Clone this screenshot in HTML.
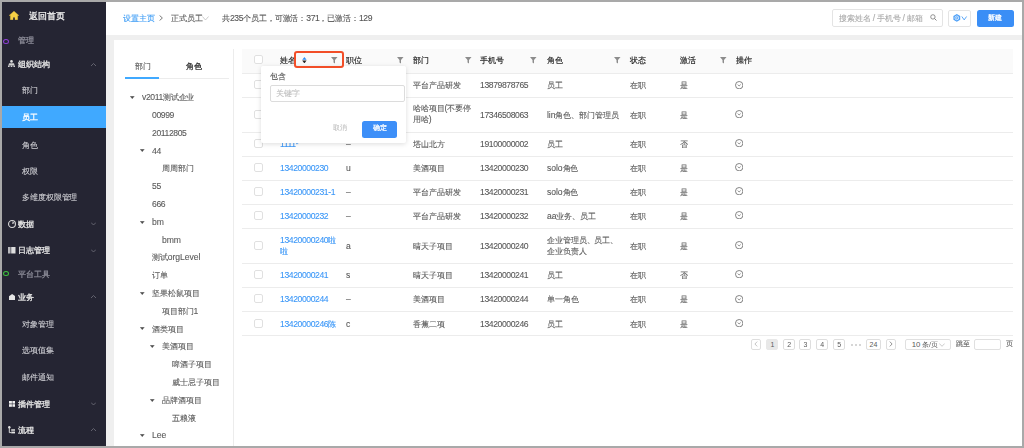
<!DOCTYPE html><html><head><meta charset="utf-8"><style>
*{margin:0;padding:0;box-sizing:border-box}
html,body{width:1024px;height:448px;overflow:hidden;background:#efefef;font-family:"Liberation Sans",sans-serif;position:relative}
.a{position:absolute;white-space:nowrap;will-change:transform;-webkit-text-stroke:0.1px currentColor;letter-spacing:-0.4px}
.c{font-size:0.9em;letter-spacing:-0.1px;position:relative;top:0.2px}
.l{letter-spacing:-0.05px}
.cb{position:absolute;width:9px;height:9px;border:1px solid #e0e0e0;border-radius:2px;background:#fff}
.pg{position:absolute;height:11.2px;border:1px solid #e0e0e0;border-radius:2px;font-size:7px;line-height:9px;text-align:center;color:#595959;background:#fff}
</style></head><body>
<div class="a" style="left:0px;top:0px;width:106.00px;height:448.00px;background:#252533"></div>
<div class="a" style="left:0px;top:106px;width:106.00px;height:22.00px;background:#40a9ff"></div>
<svg class="a" style="left:9px;top:10.8px" width="10" height="8.7" viewBox="0 0 10 8.7"><path d="M5 0.2 L9.8 4.4 L8.6 4.4 L8.6 8.7 L6 8.7 L6 6.3 L4 6.3 L4 8.7 L1.4 8.7 L1.4 4.4 L0.2 4.4 Z" fill="#f7d145" stroke="#f7d145" stroke-width="0.4" stroke-linejoin="round"/></svg>
<div class="a" style="left:29px;top:10.00px;font-size:9.6px;line-height:12px;color:#f2f2f2;-webkit-text-stroke:0.3px #f2f2f2;"><span class="c">返回首页</span></div>
<div class="a" style="left:2.9px;top:38.6px;width:5.9px;height:5.2px;border:1.2px solid #8d3fd4;border-radius:50%"></div>
<div class="a" style="left:18px;top:34.20px;font-size:8.6px;line-height:12px;color:#8a8a96;-webkit-text-stroke:0.3px #8a8a96;"><span class="c">管理</span></div>
<div class="a" style="left:18.4px;top:58.20px;font-size:8.6px;line-height:12px;color:#e6e6e6;-webkit-text-stroke:0.3px #e6e6e6;"><span class="c">组织结构</span></div>
<svg class="a" style="left:8.1px;top:60.1px" width="7" height="7" viewBox="0 0 7 7"><circle cx="3.5" cy="1.4" r="1.3" fill="#e0e0e0"/><path d="M1 3.3 H6 L6.6 5.6 H0.4 Z" fill="#cfcfcf"/><rect x="0" y="5.6" width="1.6" height="1.3" fill="#e6e6e6"/><rect x="2.7" y="5.6" width="1.6" height="1.3" fill="#e6e6e6"/><rect x="5.4" y="5.6" width="1.6" height="1.3" fill="#e6e6e6"/></svg>
<svg class="a" style="left:90.5px;top:62.50px" width="5" height="3.5" viewBox="0 0 5 3.5"><path d="M0 3 L2.5 0.5 L5 3" fill="none" stroke="#7d7d88" stroke-width="0.7"/></svg>
<div class="a" style="left:21.5px;top:84.10px;font-size:8.6px;line-height:12px;color:#cfcfd4;"><span class="c">部门</span></div>
<div class="a" style="left:21.5px;top:110.90px;font-size:8.6px;line-height:12px;color:#ffffff;-webkit-text-stroke:0.3px #ffffff;"><span class="c">员工</span></div>
<div class="a" style="left:21.5px;top:138.60px;font-size:8.6px;line-height:12px;color:#cfcfd4;"><span class="c">角色</span></div>
<div class="a" style="left:21.5px;top:164.90px;font-size:8.6px;line-height:12px;color:#cfcfd4;"><span class="c">权限</span></div>
<div class="a" style="left:21.5px;top:191.40px;font-size:8.6px;line-height:12px;color:#cfcfd4;"><span class="c">多维度权限管理</span></div>
<div class="a" style="left:18.4px;top:217.90px;font-size:8.6px;line-height:12px;color:#e6e6e6;-webkit-text-stroke:0.3px #e6e6e6;"><span class="c">数据</span></div>
<svg class="a" style="left:7.8px;top:219.5px" width="8" height="8" viewBox="0 0 8 8"><circle cx="4" cy="4" r="3.45" fill="none" stroke="#d8d8d8" stroke-width="1.1"/><path d="M4 4 V1.6 A2.4 2.4 0 0 1 6.4 4 Z" fill="#d8d8d8"/><path d="M4.6 1.6 L4.6 3.4 L6.4 3.4" fill="none" stroke="#252533" stroke-width="0.5"/></svg>
<svg class="a" style="left:90.5px;top:222.20px" width="5" height="3.5" viewBox="0 0 5 3.5"><path d="M0 0.5 L2.5 3 L5 0.5" fill="none" stroke="#7d7d88" stroke-width="0.7"/></svg>
<div class="a" style="left:18.4px;top:244.40px;font-size:8.6px;line-height:12px;color:#e6e6e6;-webkit-text-stroke:0.3px #e6e6e6;"><span class="c">日志管理</span></div>
<svg class="a" style="left:7.75px;top:246.6px" width="7.5" height="6.5" viewBox="0 0 7.5 6.5"><rect x="0" y="0" width="2.6" height="6.5" fill="#b8b8bc"/><rect x="3.2" y="0" width="4.3" height="6.5" fill="#dedede"/></svg>
<svg class="a" style="left:90.5px;top:248.70px" width="5" height="3.5" viewBox="0 0 5 3.5"><path d="M0 0.5 L2.5 3 L5 0.5" fill="none" stroke="#7d7d88" stroke-width="0.7"/></svg>
<div class="a" style="left:18.4px;top:290.90px;font-size:8.6px;line-height:12px;color:#e6e6e6;-webkit-text-stroke:0.3px #e6e6e6;"><span class="c">业务</span></div>
<svg class="a" style="left:8.6px;top:293.75px" width="6.3" height="6.25" viewBox="0 0 6.3 6.25"><path d="M0 2.2 L3.15 0 L6.3 2.2 V6.25 H0 Z" fill="#e6e6e6"/></svg>
<svg class="a" style="left:90.5px;top:295.20px" width="5" height="3.5" viewBox="0 0 5 3.5"><path d="M0 3 L2.5 0.5 L5 3" fill="none" stroke="#7d7d88" stroke-width="0.7"/></svg>
<div class="a" style="left:21.5px;top:317.90px;font-size:8.6px;line-height:12px;color:#cfcfd4;"><span class="c">对象管理</span></div>
<div class="a" style="left:21.5px;top:344.30px;font-size:8.6px;line-height:12px;color:#cfcfd4;"><span class="c">选项值集</span></div>
<div class="a" style="left:21.5px;top:370.90px;font-size:8.6px;line-height:12px;color:#cfcfd4;"><span class="c">邮件通知</span></div>
<div class="a" style="left:18.4px;top:398.10px;font-size:8.6px;line-height:12px;color:#e6e6e6;-webkit-text-stroke:0.3px #e6e6e6;"><span class="c">插件管理</span></div>
<svg class="a" style="left:8.6px;top:400.6px" width="6.3" height="5.8" viewBox="0 0 6.3 5.8"><rect x="0" y="0" width="2.9" height="2.6" fill="#eeeeee"/><rect x="3.4" y="0" width="2.9" height="2.6" fill="#eeeeee"/><rect x="0" y="3.2" width="2.9" height="2.6" fill="#eeeeee"/><rect x="3.4" y="3.2" width="2.9" height="2.6" fill="#eeeeee"/></svg>
<svg class="a" style="left:90.5px;top:402.40px" width="5" height="3.5" viewBox="0 0 5 3.5"><path d="M0 0.5 L2.5 3 L5 0.5" fill="none" stroke="#7d7d88" stroke-width="0.7"/></svg>
<div class="a" style="left:18.4px;top:424.10px;font-size:8.6px;line-height:12px;color:#e6e6e6;-webkit-text-stroke:0.3px #e6e6e6;"><span class="c">流程</span></div>
<svg class="a" style="left:8.3px;top:426.3px" width="7" height="7.5" viewBox="0 0 7 7.5"><circle cx="1.3" cy="1.3" r="1.2" fill="#e0e0e0"/><path d="M1.3 2 V6.6 H3" fill="none" stroke="#d8d8d8" stroke-width="1"/><rect x="3.2" y="3.2" width="3.8" height="1.6" fill="#cfcfcf"/><rect x="3.2" y="5.6" width="3.8" height="1.8" fill="#e6e6e6"/></svg>
<svg class="a" style="left:90.5px;top:428.40px" width="5" height="3.5" viewBox="0 0 5 3.5"><path d="M0 3 L2.5 0.5 L5 3" fill="none" stroke="#7d7d88" stroke-width="0.7"/></svg>
<div class="a" style="left:2.9px;top:271.2px;width:5.9px;height:5.2px;border:1.2px solid #3cc13c;border-radius:50%"></div>
<div class="a" style="left:18px;top:267.90px;font-size:8.6px;line-height:12px;color:#8a8a96;-webkit-text-stroke:0.3px #8a8a96;"><span class="c">平台工具</span></div>
<div class="a" style="left:106px;top:0px;width:918.00px;height:34.50px;background:#fff"></div>
<div class="a" style="left:122.7px;top:11.80px;font-size:8.6px;line-height:12px;color:#3b9bf5;"><span class="c">设置主页</span></div>
<svg class="a" style="left:159.2px;top:15px" width="4.2" height="6" viewBox="0 0 4.2 6"><path d="M0.6 0.5 L3.4 3 L0.6 5.5" fill="none" stroke="#7a7a7a" stroke-width="1"/></svg>
<div class="a" style="left:171px;top:11.80px;font-size:8.6px;line-height:12px;color:#595959;"><span class="c">正式员工</span></div>
<svg class="a" style="left:201.8px;top:15.8px" width="7" height="4.6" viewBox="0 0 7 4.6"><path d="M0.4 0.5 L3.5 4 L6.6 0.5" fill="none" stroke="#b5b5b5" stroke-width="0.7"/></svg>
<div class="a" style="left:222.2px;top:12.30px;font-size:8.6px;line-height:12px;color:#555;"><span class="c">共</span>235<span class="c">个员工，可激活：</span>371<span class="c">，已激活：</span>129</div>
<div class="a" style="left:831.8px;top:8.8px;width:110.70px;height:17.60px;border:1px solid #e4e4e4;border-radius:2px;background:#fff"></div>
<div class="a" style="left:838.6px;top:11.50px;font-size:8.84px;line-height:12px;color:#aaaaaa;"><span class="c">搜索姓名</span> / <span class="c">手机号</span> / <span class="c">邮箱</span></div>
<svg class="a" style="left:929.5px;top:14px" width="7" height="7" viewBox="0 0 7 7"><circle cx="2.9" cy="2.9" r="2.2" fill="none" stroke="#777" stroke-width="0.8"/><path d="M4.5 4.5 L6.5 6.5" stroke="#777" stroke-width="0.9"/></svg>
<div class="a" style="left:948.3px;top:9.5px;width:22.50px;height:16.90px;border:1px solid #e4e4e4;border-radius:2px;background:#fff"></div>
<svg class="a" style="left:952.5px;top:13.8px" width="15" height="7.8" viewBox="0 0 15 7.8"><path d="M3.8 0 L7.2 1.95 L7.2 5.85 L3.8 7.8 L0.4 5.85 L0.4 1.95 Z" fill="#4a9ef7"/><circle cx="3.8" cy="3.9" r="1.9" fill="none" stroke="#fff" stroke-width="0.7"/><circle cx="3.8" cy="3.9" r="0.7" fill="#fff"/><path d="M8.8 2.5 L11.2 5.9 L13.6 2.5" fill="none" stroke="#4a9ef7" stroke-width="0.9"/></svg>
<div class="a" style="left:977px;top:10.2px;width:36.80px;height:16.80px;border-radius:2.5px;background:#3a8ef6"></div>
<div class="a" style="left:988px;top:11.90px;font-size:7.55px;line-height:12px;color:#fff;-webkit-text-stroke:0.3px #fff;"><span class="c">新建</span></div>
<div class="a" style="left:114px;top:40px;width:910.00px;height:408.00px;background:#fff"></div>
<div class="a" style="left:134.5px;top:60.10px;font-size:8.6px;line-height:12px;color:#595959;"><span class="c">部门</span></div>
<div class="a" style="left:186px;top:60.10px;font-size:8.6px;line-height:12px;color:#333;-webkit-text-stroke:0.3px #333;"><span class="c">角色</span></div>
<div class="a" style="left:125.4px;top:77.5px;width:104.30px;height:1.00px;background:#ececec"></div>
<div class="a" style="left:125.4px;top:77px;width:33.70px;height:2.00px;background:#40a9ff"></div>
<div class="a" style="left:233px;top:49px;width:1.00px;height:399.00px;background:#ececec"></div>
<div class="a" style="left:142px;top:91.20px;font-size:8.6px;line-height:12px;color:#595959;">v2011<span class="c">测试企业</span></div>
<svg class="a" style="left:130.2px;top:95.90px" width="4.5" height="3" viewBox="0 0 4.5 3"><path d="M0.2 0.2 L4.3 0.2 L2.25 2.8 Z" fill="#4a4a4a" stroke="#4a4a4a" stroke-width="0.3" stroke-linejoin="round"/></svg>
<div class="a" style="left:152px;top:109.00px;font-size:8.6px;line-height:12px;color:#595959;">00999</div>
<div class="a" style="left:152px;top:126.80px;font-size:8.6px;line-height:12px;color:#595959;">20112805</div>
<div class="a" style="left:152px;top:144.60px;font-size:8.6px;line-height:12px;color:#595959;">44</div>
<svg class="a" style="left:140.2px;top:149.30px" width="4.5" height="3" viewBox="0 0 4.5 3"><path d="M0.2 0.2 L4.3 0.2 L2.25 2.8 Z" fill="#4a4a4a" stroke="#4a4a4a" stroke-width="0.3" stroke-linejoin="round"/></svg>
<div class="a" style="left:162px;top:162.40px;font-size:8.6px;line-height:12px;color:#595959;"><span class="c">周周部门</span></div>
<div class="a" style="left:152px;top:180.20px;font-size:8.6px;line-height:12px;color:#595959;">55</div>
<div class="a" style="left:152px;top:198.00px;font-size:8.6px;line-height:12px;color:#595959;">666</div>
<div class="a" style="left:152px;top:215.80px;font-size:8.6px;line-height:12px;color:#595959;"><span class="l">bm</span></div>
<svg class="a" style="left:140.2px;top:220.50px" width="4.5" height="3" viewBox="0 0 4.5 3"><path d="M0.2 0.2 L4.3 0.2 L2.25 2.8 Z" fill="#4a4a4a" stroke="#4a4a4a" stroke-width="0.3" stroke-linejoin="round"/></svg>
<div class="a" style="left:162px;top:233.60px;font-size:8.6px;line-height:12px;color:#595959;"><span class="l">bmm</span></div>
<div class="a" style="left:152px;top:251.40px;font-size:8.6px;line-height:12px;color:#595959;"><span class="c">测试</span><span class="l">orgLevel</span></div>
<div class="a" style="left:152px;top:269.20px;font-size:8.6px;line-height:12px;color:#595959;"><span class="c">订单</span></div>
<div class="a" style="left:152px;top:287.00px;font-size:8.6px;line-height:12px;color:#595959;"><span class="c">坚果松鼠项目</span></div>
<svg class="a" style="left:140.2px;top:291.70px" width="4.5" height="3" viewBox="0 0 4.5 3"><path d="M0.2 0.2 L4.3 0.2 L2.25 2.8 Z" fill="#4a4a4a" stroke="#4a4a4a" stroke-width="0.3" stroke-linejoin="round"/></svg>
<div class="a" style="left:162px;top:304.80px;font-size:8.6px;line-height:12px;color:#595959;"><span class="c">项目部门</span>1</div>
<div class="a" style="left:152px;top:322.60px;font-size:8.6px;line-height:12px;color:#595959;"><span class="c">酒类项目</span></div>
<svg class="a" style="left:140.2px;top:327.30px" width="4.5" height="3" viewBox="0 0 4.5 3"><path d="M0.2 0.2 L4.3 0.2 L2.25 2.8 Z" fill="#4a4a4a" stroke="#4a4a4a" stroke-width="0.3" stroke-linejoin="round"/></svg>
<div class="a" style="left:162px;top:340.40px;font-size:8.6px;line-height:12px;color:#595959;"><span class="c">美酒项目</span></div>
<svg class="a" style="left:150.2px;top:345.10px" width="4.5" height="3" viewBox="0 0 4.5 3"><path d="M0.2 0.2 L4.3 0.2 L2.25 2.8 Z" fill="#4a4a4a" stroke="#4a4a4a" stroke-width="0.3" stroke-linejoin="round"/></svg>
<div class="a" style="left:172px;top:358.20px;font-size:8.6px;line-height:12px;color:#595959;"><span class="c">啤酒子项目</span></div>
<div class="a" style="left:172px;top:376.00px;font-size:8.6px;line-height:12px;color:#595959;"><span class="c">威士忌子项目</span></div>
<div class="a" style="left:162px;top:393.80px;font-size:8.6px;line-height:12px;color:#595959;"><span class="c">品牌酒项目</span></div>
<svg class="a" style="left:150.2px;top:398.50px" width="4.5" height="3" viewBox="0 0 4.5 3"><path d="M0.2 0.2 L4.3 0.2 L2.25 2.8 Z" fill="#4a4a4a" stroke="#4a4a4a" stroke-width="0.3" stroke-linejoin="round"/></svg>
<div class="a" style="left:172px;top:411.60px;font-size:8.6px;line-height:12px;color:#595959;"><span class="c">五粮液</span></div>
<div class="a" style="left:152px;top:429.40px;font-size:8.6px;line-height:12px;color:#595959;"><span class="l">Lee</span></div>
<svg class="a" style="left:140.2px;top:434.10px" width="4.5" height="3" viewBox="0 0 4.5 3"><path d="M0.2 0.2 L4.3 0.2 L2.25 2.8 Z" fill="#4a4a4a" stroke="#4a4a4a" stroke-width="0.3" stroke-linejoin="round"/></svg>
<div class="a" style="left:242px;top:48.8px;width:770.70px;height:24.90px;background:#fafafa;border-bottom:1px solid #ececec"></div>
<div class="a" style="left:242px;top:96.9px;width:770.70px;height:1.00px;background:#ececec"></div>
<div class="a" style="left:242px;top:131.7px;width:770.70px;height:1.00px;background:#ececec"></div>
<div class="a" style="left:242px;top:155.5px;width:770.70px;height:1.00px;background:#ececec"></div>
<div class="a" style="left:242px;top:179.8px;width:770.70px;height:1.00px;background:#ececec"></div>
<div class="a" style="left:242px;top:203.9px;width:770.70px;height:1.00px;background:#ececec"></div>
<div class="a" style="left:242px;top:228.0px;width:770.70px;height:1.00px;background:#ececec"></div>
<div class="a" style="left:242px;top:262.9px;width:770.70px;height:1.00px;background:#ececec"></div>
<div class="a" style="left:242px;top:287.0px;width:770.70px;height:1.00px;background:#ececec"></div>
<div class="a" style="left:242px;top:311.1px;width:770.70px;height:1.00px;background:#ececec"></div>
<div class="a" style="left:242px;top:335.1px;width:770.70px;height:1.00px;background:#ececec"></div>
<div class="cb" style="left:254px;top:54.90px"></div>
<div class="a" style="left:280px;top:53.90px;font-size:8.6px;line-height:12px;color:#262626;-webkit-text-stroke:0.18px #262626"><span class="c">姓名</span></div>
<div class="a" style="left:346px;top:53.90px;font-size:8.6px;line-height:12px;color:#262626;-webkit-text-stroke:0.18px #262626"><span class="c">职位</span></div>
<div class="a" style="left:413px;top:53.90px;font-size:8.6px;line-height:12px;color:#262626;-webkit-text-stroke:0.18px #262626"><span class="c">部门</span></div>
<div class="a" style="left:480px;top:53.90px;font-size:8.6px;line-height:12px;color:#262626;-webkit-text-stroke:0.18px #262626"><span class="c">手机号</span></div>
<div class="a" style="left:547px;top:53.90px;font-size:8.6px;line-height:12px;color:#262626;-webkit-text-stroke:0.18px #262626"><span class="c">角色</span></div>
<div class="a" style="left:629.5px;top:53.90px;font-size:8.6px;line-height:12px;color:#262626;-webkit-text-stroke:0.18px #262626"><span class="c">状态</span></div>
<div class="a" style="left:680px;top:53.90px;font-size:8.6px;line-height:12px;color:#262626;-webkit-text-stroke:0.18px #262626"><span class="c">激活</span></div>
<div class="a" style="left:736px;top:53.90px;font-size:8.6px;line-height:12px;color:#262626;-webkit-text-stroke:0.18px #262626"><span class="c">操作</span></div>
<svg class="a" style="left:330.5px;top:56.7px" width="6.5" height="6.5" viewBox="0 0 6.5 6.5"><path d="M0 0 H6.5 L4 3 V6.5 L2.5 5.5 V3 Z" fill="#8c8c8c"/></svg>
<svg class="a" style="left:397px;top:56.7px" width="6.5" height="6.5" viewBox="0 0 6.5 6.5"><path d="M0 0 H6.5 L4 3 V6.5 L2.5 5.5 V3 Z" fill="#8c8c8c"/></svg>
<svg class="a" style="left:464.5px;top:56.7px" width="6.5" height="6.5" viewBox="0 0 6.5 6.5"><path d="M0 0 H6.5 L4 3 V6.5 L2.5 5.5 V3 Z" fill="#8c8c8c"/></svg>
<svg class="a" style="left:530px;top:56.7px" width="6.5" height="6.5" viewBox="0 0 6.5 6.5"><path d="M0 0 H6.5 L4 3 V6.5 L2.5 5.5 V3 Z" fill="#8c8c8c"/></svg>
<svg class="a" style="left:613.8px;top:56.7px" width="6.5" height="6.5" viewBox="0 0 6.5 6.5"><path d="M0 0 H6.5 L4 3 V6.5 L2.5 5.5 V3 Z" fill="#8c8c8c"/></svg>
<svg class="a" style="left:719.5px;top:56.7px" width="6.5" height="6.5" viewBox="0 0 6.5 6.5"><path d="M0 0 H6.5 L4 3 V6.5 L2.5 5.5 V3 Z" fill="#8c8c8c"/></svg>
<div class="cb" style="left:254px;top:80.40px"></div>
<div class="a" style="left:413px;top:79.40px;font-size:8.6px;line-height:12px;color:#595959;"><span class="c">平台产品研发</span></div>
<div class="a" style="left:480px;top:79.40px;font-size:8.6px;line-height:12px;color:#595959;">13879878765</div>
<div class="a" style="left:547px;top:79.40px;font-size:8.6px;line-height:12px;color:#595959;"><span class="c">员工</span></div>
<div class="a" style="left:629.5px;top:79.40px;font-size:8.6px;line-height:12px;color:#595959;"><span class="c">在职</span></div>
<div class="a" style="left:680px;top:79.40px;font-size:8.6px;line-height:12px;color:#595959;"><span class="c">是</span></div>
<svg class="a" style="left:735px;top:80.50px" width="8.4" height="8.4" viewBox="0 0 8.4 8.4"><circle cx="4.2" cy="4.2" r="3.7" fill="none" stroke="#666" stroke-width="0.8"/><path d="M2.8 3.6 L4.2 5 L5.6 3.6" fill="none" stroke="#666" stroke-width="0.8"/></svg>
<div class="cb" style="left:254px;top:109.70px"></div>
<div class="a" style="left:413px;top:103.40px;font-size:8.6px;line-height:11.3px;color:#595959"><span class="c">哈哈项目</span>(<span class="c">不要停</span><br><span class="c">用哈</span>)</div>
<div class="a" style="left:480px;top:108.70px;font-size:8.6px;line-height:12px;color:#595959;">17346508063</div>
<div class="a" style="left:547px;top:108.70px;font-size:8.6px;line-height:12px;color:#595959;"><span class="l">lin</span><span class="c">角色、部门管理员</span></div>
<div class="a" style="left:629.5px;top:108.70px;font-size:8.6px;line-height:12px;color:#595959;"><span class="c">在职</span></div>
<div class="a" style="left:680px;top:108.70px;font-size:8.6px;line-height:12px;color:#595959;"><span class="c">是</span></div>
<svg class="a" style="left:735px;top:109.80px" width="8.4" height="8.4" viewBox="0 0 8.4 8.4"><circle cx="4.2" cy="4.2" r="3.7" fill="none" stroke="#666" stroke-width="0.8"/><path d="M2.8 3.6 L4.2 5 L5.6 3.6" fill="none" stroke="#666" stroke-width="0.8"/></svg>
<div class="cb" style="left:254px;top:139.00px"></div>
<div class="a" style="left:280px;top:138.00px;font-size:8.6px;line-height:12px;color:#3b97f7;">1111*</div>
<div class="a" style="left:346px;top:138.00px;font-size:8.6px;line-height:12px;color:#595959;">–</div>
<div class="a" style="left:413px;top:138.00px;font-size:8.6px;line-height:12px;color:#595959;"><span class="c">塔山北方</span></div>
<div class="a" style="left:480px;top:138.00px;font-size:8.6px;line-height:12px;color:#595959;">19100000002</div>
<div class="a" style="left:547px;top:138.00px;font-size:8.6px;line-height:12px;color:#595959;"><span class="c">员工</span></div>
<div class="a" style="left:629.5px;top:138.00px;font-size:8.6px;line-height:12px;color:#595959;"><span class="c">在职</span></div>
<div class="a" style="left:680px;top:138.00px;font-size:8.6px;line-height:12px;color:#595959;"><span class="c">否</span></div>
<svg class="a" style="left:735px;top:139.10px" width="8.4" height="8.4" viewBox="0 0 8.4 8.4"><circle cx="4.2" cy="4.2" r="3.7" fill="none" stroke="#666" stroke-width="0.8"/><path d="M2.8 3.6 L4.2 5 L5.6 3.6" fill="none" stroke="#666" stroke-width="0.8"/></svg>
<div class="cb" style="left:254px;top:163.10px"></div>
<div class="a" style="left:280px;top:162.10px;font-size:8.6px;line-height:12px;color:#3b97f7;">13420000230</div>
<div class="a" style="left:346px;top:162.10px;font-size:8.6px;line-height:12px;color:#595959;">u</div>
<div class="a" style="left:413px;top:162.10px;font-size:8.6px;line-height:12px;color:#595959;"><span class="c">美酒项目</span></div>
<div class="a" style="left:480px;top:162.10px;font-size:8.6px;line-height:12px;color:#595959;">13420000230</div>
<div class="a" style="left:547px;top:162.10px;font-size:8.6px;line-height:12px;color:#595959;"><span class="l">solo</span><span class="c">角色</span></div>
<div class="a" style="left:629.5px;top:162.10px;font-size:8.6px;line-height:12px;color:#595959;"><span class="c">在职</span></div>
<div class="a" style="left:680px;top:162.10px;font-size:8.6px;line-height:12px;color:#595959;"><span class="c">是</span></div>
<svg class="a" style="left:735px;top:163.20px" width="8.4" height="8.4" viewBox="0 0 8.4 8.4"><circle cx="4.2" cy="4.2" r="3.7" fill="none" stroke="#666" stroke-width="0.8"/><path d="M2.8 3.6 L4.2 5 L5.6 3.6" fill="none" stroke="#666" stroke-width="0.8"/></svg>
<div class="cb" style="left:254px;top:187.20px"></div>
<div class="a" style="left:280px;top:186.20px;font-size:8.6px;line-height:12px;color:#3b97f7;">13420000231-1</div>
<div class="a" style="left:346px;top:186.20px;font-size:8.6px;line-height:12px;color:#595959;">–</div>
<div class="a" style="left:413px;top:186.20px;font-size:8.6px;line-height:12px;color:#595959;"><span class="c">平台产品研发</span></div>
<div class="a" style="left:480px;top:186.20px;font-size:8.6px;line-height:12px;color:#595959;">13420000231</div>
<div class="a" style="left:547px;top:186.20px;font-size:8.6px;line-height:12px;color:#595959;"><span class="l">solo</span><span class="c">角色</span></div>
<div class="a" style="left:629.5px;top:186.20px;font-size:8.6px;line-height:12px;color:#595959;"><span class="c">在职</span></div>
<div class="a" style="left:680px;top:186.20px;font-size:8.6px;line-height:12px;color:#595959;"><span class="c">是</span></div>
<svg class="a" style="left:735px;top:187.30px" width="8.4" height="8.4" viewBox="0 0 8.4 8.4"><circle cx="4.2" cy="4.2" r="3.7" fill="none" stroke="#666" stroke-width="0.8"/><path d="M2.8 3.6 L4.2 5 L5.6 3.6" fill="none" stroke="#666" stroke-width="0.8"/></svg>
<div class="cb" style="left:254px;top:211.30px"></div>
<div class="a" style="left:280px;top:210.30px;font-size:8.6px;line-height:12px;color:#3b97f7;">13420000232</div>
<div class="a" style="left:346px;top:210.30px;font-size:8.6px;line-height:12px;color:#595959;">–</div>
<div class="a" style="left:413px;top:210.30px;font-size:8.6px;line-height:12px;color:#595959;"><span class="c">平台产品研发</span></div>
<div class="a" style="left:480px;top:210.30px;font-size:8.6px;line-height:12px;color:#595959;">13420000232</div>
<div class="a" style="left:547px;top:210.30px;font-size:8.6px;line-height:12px;color:#595959;"><span class="l">aa</span><span class="c">业务、员工</span></div>
<div class="a" style="left:629.5px;top:210.30px;font-size:8.6px;line-height:12px;color:#595959;"><span class="c">在职</span></div>
<div class="a" style="left:680px;top:210.30px;font-size:8.6px;line-height:12px;color:#595959;"><span class="c">是</span></div>
<svg class="a" style="left:735px;top:211.40px" width="8.4" height="8.4" viewBox="0 0 8.4 8.4"><circle cx="4.2" cy="4.2" r="3.7" fill="none" stroke="#666" stroke-width="0.8"/><path d="M2.8 3.6 L4.2 5 L5.6 3.6" fill="none" stroke="#666" stroke-width="0.8"/></svg>
<div class="cb" style="left:254px;top:240.80px"></div>
<div class="a" style="left:280px;top:234.50px;font-size:8.6px;line-height:11.3px;color:#3b97f7">13420000240<span class="c">啦</span><br><span class="c">啦</span></div>
<div class="a" style="left:346px;top:239.80px;font-size:8.6px;line-height:12px;color:#595959;">a</div>
<div class="a" style="left:413px;top:239.80px;font-size:8.6px;line-height:12px;color:#595959;"><span class="c">晴天子项目</span></div>
<div class="a" style="left:480px;top:239.80px;font-size:8.6px;line-height:12px;color:#595959;">13420000240</div>
<div class="a" style="left:547px;top:234.50px;font-size:8.6px;line-height:11.3px;color:#595959"><span class="c">企业管理员、员工、</span><br><span class="c">企业负责人</span></div>
<div class="a" style="left:629.5px;top:239.80px;font-size:8.6px;line-height:12px;color:#595959;"><span class="c">在职</span></div>
<div class="a" style="left:680px;top:239.80px;font-size:8.6px;line-height:12px;color:#595959;"><span class="c">是</span></div>
<svg class="a" style="left:735px;top:240.90px" width="8.4" height="8.4" viewBox="0 0 8.4 8.4"><circle cx="4.2" cy="4.2" r="3.7" fill="none" stroke="#666" stroke-width="0.8"/><path d="M2.8 3.6 L4.2 5 L5.6 3.6" fill="none" stroke="#666" stroke-width="0.8"/></svg>
<div class="cb" style="left:254px;top:270.30px"></div>
<div class="a" style="left:280px;top:269.30px;font-size:8.6px;line-height:12px;color:#3b97f7;">13420000241</div>
<div class="a" style="left:346px;top:269.30px;font-size:8.6px;line-height:12px;color:#595959;">s</div>
<div class="a" style="left:413px;top:269.30px;font-size:8.6px;line-height:12px;color:#595959;"><span class="c">晴天子项目</span></div>
<div class="a" style="left:480px;top:269.30px;font-size:8.6px;line-height:12px;color:#595959;">13420000241</div>
<div class="a" style="left:547px;top:269.30px;font-size:8.6px;line-height:12px;color:#595959;"><span class="c">员工</span></div>
<div class="a" style="left:629.5px;top:269.30px;font-size:8.6px;line-height:12px;color:#595959;"><span class="c">在职</span></div>
<div class="a" style="left:680px;top:269.30px;font-size:8.6px;line-height:12px;color:#595959;"><span class="c">否</span></div>
<svg class="a" style="left:735px;top:270.40px" width="8.4" height="8.4" viewBox="0 0 8.4 8.4"><circle cx="4.2" cy="4.2" r="3.7" fill="none" stroke="#666" stroke-width="0.8"/><path d="M2.8 3.6 L4.2 5 L5.6 3.6" fill="none" stroke="#666" stroke-width="0.8"/></svg>
<div class="cb" style="left:254px;top:294.40px"></div>
<div class="a" style="left:280px;top:293.40px;font-size:8.6px;line-height:12px;color:#3b97f7;">13420000244</div>
<div class="a" style="left:346px;top:293.40px;font-size:8.6px;line-height:12px;color:#595959;">–</div>
<div class="a" style="left:413px;top:293.40px;font-size:8.6px;line-height:12px;color:#595959;"><span class="c">美酒项目</span></div>
<div class="a" style="left:480px;top:293.40px;font-size:8.6px;line-height:12px;color:#595959;">13420000244</div>
<div class="a" style="left:547px;top:293.40px;font-size:8.6px;line-height:12px;color:#595959;"><span class="c">单一角色</span></div>
<div class="a" style="left:629.5px;top:293.40px;font-size:8.6px;line-height:12px;color:#595959;"><span class="c">在职</span></div>
<div class="a" style="left:680px;top:293.40px;font-size:8.6px;line-height:12px;color:#595959;"><span class="c">是</span></div>
<svg class="a" style="left:735px;top:294.50px" width="8.4" height="8.4" viewBox="0 0 8.4 8.4"><circle cx="4.2" cy="4.2" r="3.7" fill="none" stroke="#666" stroke-width="0.8"/><path d="M2.8 3.6 L4.2 5 L5.6 3.6" fill="none" stroke="#666" stroke-width="0.8"/></svg>
<div class="cb" style="left:254px;top:318.50px"></div>
<div class="a" style="left:280px;top:317.50px;font-size:8.6px;line-height:12px;color:#3b97f7;">13420000246<span class="c">陈</span></div>
<div class="a" style="left:346px;top:317.50px;font-size:8.6px;line-height:12px;color:#595959;">c</div>
<div class="a" style="left:413px;top:317.50px;font-size:8.6px;line-height:12px;color:#595959;"><span class="c">香蕉二项</span></div>
<div class="a" style="left:480px;top:317.50px;font-size:8.6px;line-height:12px;color:#595959;">13420000246</div>
<div class="a" style="left:547px;top:317.50px;font-size:8.6px;line-height:12px;color:#595959;"><span class="c">员工</span></div>
<div class="a" style="left:629.5px;top:317.50px;font-size:8.6px;line-height:12px;color:#595959;"><span class="c">在职</span></div>
<div class="a" style="left:680px;top:317.50px;font-size:8.6px;line-height:12px;color:#595959;"><span class="c">是</span></div>
<svg class="a" style="left:735px;top:318.60px" width="8.4" height="8.4" viewBox="0 0 8.4 8.4"><circle cx="4.2" cy="4.2" r="3.7" fill="none" stroke="#666" stroke-width="0.8"/><path d="M2.8 3.6 L4.2 5 L5.6 3.6" fill="none" stroke="#666" stroke-width="0.8"/></svg>
<div class="a" style="left:260.8px;top:65.6px;width:144.90px;height:77.20px;background:#fff;border-radius:2px;box-shadow:0 1px 5px rgba(0,0,0,0.14)"></div>
<div class="a" style="left:270px;top:70.40px;font-size:8.6px;line-height:12px;color:#595959;"><span class="c">包含</span></div>
<div class="a" style="left:269.7px;top:84.5px;width:135.00px;height:17.30px;border:1px solid #dcdcdc;border-radius:2px;background:#fff"></div>
<div class="a" style="left:276px;top:87.10px;font-size:8.6px;line-height:12px;color:#bfbfbf;"><span class="c">关键字</span></div>
<div class="a" style="left:333px;top:121.80px;font-size:7.55px;line-height:12px;color:#c0c0c0;"><span class="c">取消</span></div>
<div class="a" style="left:362px;top:120.5px;width:35.00px;height:16.90px;background:#3d8ff8;border-radius:2.5px"></div>
<div class="a" style="left:373px;top:122.10px;font-size:7.55px;line-height:12px;color:#fff;-webkit-text-stroke:0.25px #fff"><span class="c">确定</span></div>
<div class="a" style="left:293.8px;top:50.8px;width:49.50px;height:16.70px;border:2px solid #f24e28;border-radius:3px"></div>
<svg class="a" style="left:301.8px;top:56.9px" width="4.8" height="6.4" viewBox="0 0 4.8 6.4"><path d="M2.4 0 L4.6 2.8 H0.2 Z" fill="#2f8ff5"/><path d="M0.2 3.6 H4.6 L2.4 6.4 Z" fill="#262626"/></svg>
<div class="pg" style="left:751.1px;top:338.8px;width:10.4px;background:#fff;border-color:#dedede;font-size:7px"><svg width="4" height="6" viewBox="0 0 4 6" style="margin-top:1.5px"><path d="M3.2 0.6 L0.9 3 L3.2 5.4" fill="none" stroke="#aaa" stroke-width="0.7"/></svg></div>
<div class="pg" style="left:766.2px;top:338.8px;width:12.3px;background:#e8e8e8;border-color:#e8e8e8;font-size:7px">1</div>
<div class="pg" style="left:783.3px;top:338.8px;width:11.6px;background:#fff;border-color:#dedede;font-size:7px">2</div>
<div class="pg" style="left:799.4px;top:338.8px;width:11.9px;background:#fff;border-color:#dedede;font-size:7px">3</div>
<div class="pg" style="left:816.2px;top:338.8px;width:11.9px;background:#fff;border-color:#dedede;font-size:7px">4</div>
<div class="pg" style="left:833.2px;top:338.8px;width:12.0px;background:#fff;border-color:#dedede;font-size:7px">5</div>
<svg class="a" style="left:851px;top:343.5px" width="10" height="2" viewBox="0 0 10 2"><circle cx="1" cy="1" r="0.75" fill="#999"/><circle cx="5" cy="1" r="0.75" fill="#999"/><circle cx="9" cy="1" r="0.75" fill="#999"/></svg>
<div class="pg" style="left:866.2px;top:338.8px;width:14.6px;background:#fff;border-color:#dedede;font-size:7px">24</div>
<div class="pg" style="left:885.7px;top:338.8px;width:10.4px;background:#fff;border-color:#dedede;font-size:7px"><svg width="4" height="6" viewBox="0 0 4 6" style="margin-top:1.5px"><path d="M0.8 0.6 L3.1 3 L0.8 5.4" fill="none" stroke="#666" stroke-width="0.7"/></svg></div>
<div class="pg" style="left:905.3px;top:338.8px;width:46.1px;text-align:left;padding-left:5.5px;font-size:7.8px;letter-spacing:-0.2px">10 <span class="c" style="top:0">条/页</span></div>
<svg class="a" style="left:939px;top:342.6px" width="6" height="4" viewBox="0 0 6 4"><path d="M0.3 0.5 L3 3.3 L5.7 0.5" fill="none" stroke="#aaa" stroke-width="0.6"/></svg>
<div class="a" style="left:955.9px;top:338.20px;font-size:7.55px;line-height:12px;color:#595959;"><span class="c">跳至</span></div>
<div class="pg" style="left:973.7px;top:338.8px;width:27.8px"></div>
<div class="a" style="left:1005.9px;top:338.20px;font-size:7.55px;line-height:12px;color:#595959;"><span class="c">页</span></div>
<div class="a" style="left:0px;top:0px;width:1024.00px;height:1.50px;background:#a9a9a9"></div>
<div class="a" style="left:0px;top:446px;width:1024.00px;height:2.00px;background:#a9a9a9"></div>
<div class="a" style="left:0px;top:0px;width:2.00px;height:448.00px;background:#a9a9a9"></div>
<div class="a" style="left:1022px;top:0px;width:2.00px;height:448.00px;background:#a9a9a9"></div>
</body></html>
